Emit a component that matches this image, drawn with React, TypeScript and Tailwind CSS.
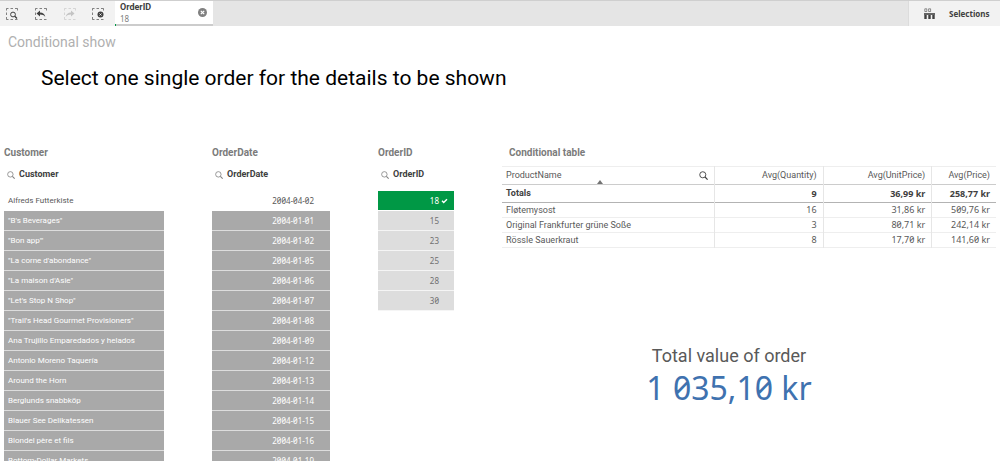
import type { ReactNode } from "react";

const CUSTOMERS = [
  "Alfreds Futterkiste",
  "\"B's Beverages\"",
  "\"Bon app'\"",
  "\"La corne d'abondance\"",
  "\"La maison d'Asie\"",
  "\"Let's Stop N Shop\"",
  "\"Trail's Head Gourmet Provisioners\"",
  "Ana Trujillo Emparedados y helados",
  "Antonio Moreno Taquería",
  "Around the Horn",
  "Berglunds snabbköp",
  "Blauer See Delikatessen",
  "Blondel père et fils",
  "Bottom-Dollar Markets",
];

const DATES = [
  "2004-04-02",
  "2004-01-01",
  "2004-01-02",
  "2004-01-05",
  "2004-01-06",
  "2004-01-07",
  "2004-01-08",
  "2004-01-09",
  "2004-01-12",
  "2004-01-13",
  "2004-01-14",
  "2004-01-15",
  "2004-01-16",
  "2004-01-19",
];

const ORDER_IDS = ["18", "15", "23", "25", "28", "30"];

const PRODUCTS = [
  { name: "Fløtemysost", quantity: "16", unitPrice: "31,86 kr", price: "509,76 kr" },
  { name: "Original Frankfurter grüne Soße", quantity: "3", unitPrice: "80,71 kr", price: "242,14 kr" },
  { name: "Rössle Sauerkraut", quantity: "8", unitPrice: "17,70 kr", price: "141,60 kr" },
];

// Noto Sans has the slashed zero that figures are set with
const FIGURES = "font-['Noto_Sans',sans-serif] slashed-zero";

function SearchIcon({ className }: { className: string }) {
  return (
    <svg viewBox="0 0 10 10" fill="none" stroke="currentColor" className={className} aria-hidden="true">
      <circle cx="4.2" cy="4.2" r="3.4" />
      <path d="M6.7 6.7 9.6 9.6" strokeWidth="1.3" />
    </svg>
  );
}

// Dashed selection frame shared by the toolbar icons
function SelectionIcon({ children }: { children: ReactNode }) {
  return (
    <svg viewBox="0 0 12 12" className="size-3" fill="none" stroke="currentColor" aria-hidden="true">
      <path
        d="M.5 2.5V.5h2M4.5.5H7M9 .5h2.5v2M.5 4.5V7M.5 9v2.500h2M4.500 11.500H7M9 11.500h2.500"
        strokeWidth=".8"
        opacity=".8"
      />
      {children}
    </svg>
  );
}

function ToolButton({ label, disabled, children }: { label: string; disabled?: boolean; children: ReactNode }) {
  return (
    <button
      type="button"
      aria-label={label}
      disabled={disabled}
      className="flex h-full w-[29px] items-center pl-1.5 text-[#404040] disabled:text-[#c4c4c4]"
    >
      <SelectionIcon>{children}</SelectionIcon>
    </button>
  );
}

function Toolbar() {
  return (
    <header className="flex h-[26px] shrink-0 border-t border-[#cfcfcf] bg-[#e5e5e5]">
      <div className="flex w-[115px] bg-[#f2f2f2]">
        <ToolButton label="Smart search">
          <circle cx="7" cy="6.5" r="2.4" />
          <path d="m8.800 8.300 2.200 2.200" strokeWidth="1.3" />
        </ToolButton>
        <ToolButton label="Step back">
          <path d="M1.500 5.500 5 2.500v2c3 0 4.800 1.500 5.300 4.500C9 7.300 7.500 6.600 5 6.600v1.900z" fill="currentColor" stroke="none" />
        </ToolButton>
        <ToolButton label="Step forward" disabled>
          <path d="M10.500 5.500 7 2.500v2c-3 0-4.800 1.500-5.300 4.500C3 7.300 4.500 6.600 7 6.600v1.900z" fill="currentColor" stroke="none" />
        </ToolButton>
        <ToolButton label="Clear all selections">
          <circle cx="8.500" cy="6.500" r="3" fill="currentColor" stroke="none" />
          <path d="m7.500 5.500 2 2m0-2-2 2" stroke="#f2f2f2" strokeWidth=".9" />
        </ToolButton>
      </div>

      {/* Current selection */}
      <div className="flex w-[98px] flex-col bg-white">
        <div className="flex flex-1 items-center justify-between pr-1.5 pl-[5px]">
          <div>
            <p className="text-[9px] leading-[11px] font-bold text-[#404040]">OrderID</p>
            <p className="font-['Noto_Sans',sans-serif] text-[8px] leading-[11px] text-[#808080]">18</p>
          </div>
          <button type="button" aria-label="Clear OrderID" className="text-[#808080]">
            <svg viewBox="0 0 9 9" className="size-[9px]" aria-hidden="true">
              <circle cx="4.5" cy="4.5" r="4.5" fill="currentColor" />
              <path d="m2.800 2.800 3.400 3.400m0-3.400L2.800 6.200" stroke="#fff" strokeWidth="1.2" />
            </svg>
          </button>
        </div>
        <div className="flex h-0.5 bg-[#cccccc]">
          <div className="w-px bg-[#009845]" />
        </div>
      </div>

      <button
        type="button"
        className="ml-auto flex w-[92px] items-center gap-3.5 border-l border-[#dcdcdc] bg-[#f2f2f2] pl-[15px] text-[9px] font-bold text-[#404040]"
      >
        <svg viewBox="0 0 11 11" className="size-[11px]" fill="none" stroke="currentColor" aria-hidden="true">
          <path d="M.8.8h2v2.700h-2zM4.600.8h2v2.700h-2z" strokeWidth=".8" opacity=".7" />
          <path d="M0 6h11" strokeWidth="1.6" />
          <path d="M1.500 7v4M5.500 7v4M9.500 7v4" strokeWidth="2.4" />
        </svg>
        <span className="font-['Noto_Sans',sans-serif] text-[8px]">Selections</span>
      </button>
    </header>
  );
}

function ListBox({ title, className, children }: { title: string; className: string; children: ReactNode }) {
  return (
    <section className={className}>
      <h2 className="text-[10px] leading-4 font-bold text-[#7b7b7b]">{title}</h2>
      <div className="mt-1.5 flex h-4 items-center gap-1 pl-[3px]">
        <button type="button" aria-label={`Search ${title}`} className="text-[#808080]">
          <SearchIcon className="size-2" />
        </button>
        <h3 className="text-[9px] font-bold text-[#404040]">{title}</h3>
      </div>
      <ul className="mt-2 text-[8px]">{children}</ul>
    </section>
  );
}

const ROW = "flex h-5 w-full items-center border-b";
const POSSIBLE = "border-white bg-white text-[#595959]";
const EXCLUDED = "border-[#dddddd] bg-[#a9a9a9] text-white";

function Sheet() {
  return (
    <main className="flex-1 px-1">
      <h1 className="pt-1.5 pl-1 text-sm leading-5 text-[#b0b0b0]">Conditional show</h1>
      <p className="mt-3 pl-[37px] text-[21px] leading-7 text-black">
        Select one single order for the details to be shown
      </p>

      <div className="mt-[53px] grid grid-cols-[208fr_166fr_124fr_494fr]">
        <ListBox title="Customer" className="pr-12">
          {CUSTOMERS.map((name, i) => (
            <li key={name}>
              <button type="button" className={`${ROW} pl-1 ${i === 0 ? POSSIBLE : EXCLUDED}`}>
                {name}
              </button>
            </li>
          ))}
        </ListBox>

        <ListBox title="OrderDate" className="pr-12">
          {DATES.map((date, i) => (
            <li key={date}>
              <button
                type="button"
                className={`${ROW} ${FIGURES} justify-end pr-4 ${i === 0 ? POSSIBLE : EXCLUDED}`}
              >
                {date}
              </button>
            </li>
          ))}
        </ListBox>

        <ListBox title="OrderID" className="pr-12">
          {ORDER_IDS.map((id, i) => (
            <li key={id}>
              <button
                type="button"
                className={`${ROW} ${FIGURES} justify-end gap-0.5 pr-1.5 ${
                  i === 0 ? "border-white bg-[#009845] text-white" : "border-[#f5f5f5] bg-[#dddddd] text-[#707070]"
                }`}
              >
                {id}
                <svg viewBox="0 0 7 7" className="size-[7px]" fill="none" stroke="currentColor" aria-hidden="true">
                  {i === 0 && <path d="m1 3.800 1.700 1.700L6 2.200" strokeWidth="1.4" />}
                </svg>
              </button>
            </li>
          ))}
        </ListBox>

        <div>
          <h2 className="pl-[7px] text-[10px] leading-4 font-bold text-[#7b7b7b]">Conditional table</h2>
          <table className="mt-[5px] w-full table-fixed border-collapse text-[9px] text-[#595959]">
            <colgroup>
              <col className="w-[43%]" />
              <col className="w-[22%]" />
              <col className="w-[22%]" />
              <col className="w-[13%]" />
            </colgroup>
            <thead>
              <tr className="h-[18px] border-t border-b border-t-[#eeeeee] border-b-[#cccccc]">
                <th className="relative border-r border-[#e6e6e6] px-1 text-left font-normal">
                  <div className="flex items-center justify-between pr-0.5">
                    ProductName
                    <button type="button" aria-label="Search ProductName" className="text-[#404040]">
                      <SearchIcon className="size-[9px]" />
                    </button>
                  </div>
                  <svg viewBox="0 0 6 4" className="absolute bottom-0 left-[45%] h-1 w-1.5" aria-hidden="true">
                    <path d="M3 0 6 4H0z" fill="#737373" />
                  </svg>
                </th>
                <th className="border-r border-[#e6e6e6] px-1.5 text-right font-normal">Avg(Quantity)</th>
                <th className="border-r border-[#e6e6e6] px-1.5 text-right font-normal">Avg(UnitPrice)</th>
                <th className="px-1.5 text-right font-normal">Avg(Price)</th>
              </tr>
            </thead>
            <tbody>
              <tr className="h-[18px] border-b border-[#b3b3b3] font-bold text-[#404040]">
                <th className="border-r border-r-[#e6e6e6] px-1 text-left">Totals</th>
                <td className={`${FIGURES} border-r border-r-[#e6e6e6] px-1.5 text-right`}>9</td>
                <td className={`${FIGURES} border-r border-r-[#e6e6e6] px-1.5 text-right`}>36,99 kr</td>
                <td className={`${FIGURES} px-1.5 text-right`}>258,77 kr</td>
              </tr>
              {PRODUCTS.map((product) => (
                <tr key={product.name} className="h-[15px] border-b border-[#eeeeee] leading-[14px]">
                  <td className="border-r border-r-[#e6e6e6] px-1">{product.name}</td>
                  <td className={`${FIGURES} border-r border-r-[#e6e6e6] px-1.5 text-right`}>{product.quantity}</td>
                  <td className={`${FIGURES} border-r border-r-[#e6e6e6] px-1.5 text-right`}>{product.unitPrice}</td>
                  <td className={`${FIGURES} px-1.5 text-right`}>{product.price}</td>
                </tr>
              ))}
            </tbody>
          </table>

          <div className="mt-24 mr-10 text-center">
            <p className="text-lg leading-6 text-[#595959]">Total value of order</p>
            <p className={`${FIGURES} text-[32px] leading-10 text-[#3f72af]`}>1 035,10 kr</p>
          </div>
        </div>
      </div>
    </main>
  );
}

export default function App() {
  return (
    <div className="flex h-screen flex-col overflow-hidden bg-white font-[Roboto,sans-serif]">
      <Toolbar />
      <Sheet />
    </div>
  );
}
